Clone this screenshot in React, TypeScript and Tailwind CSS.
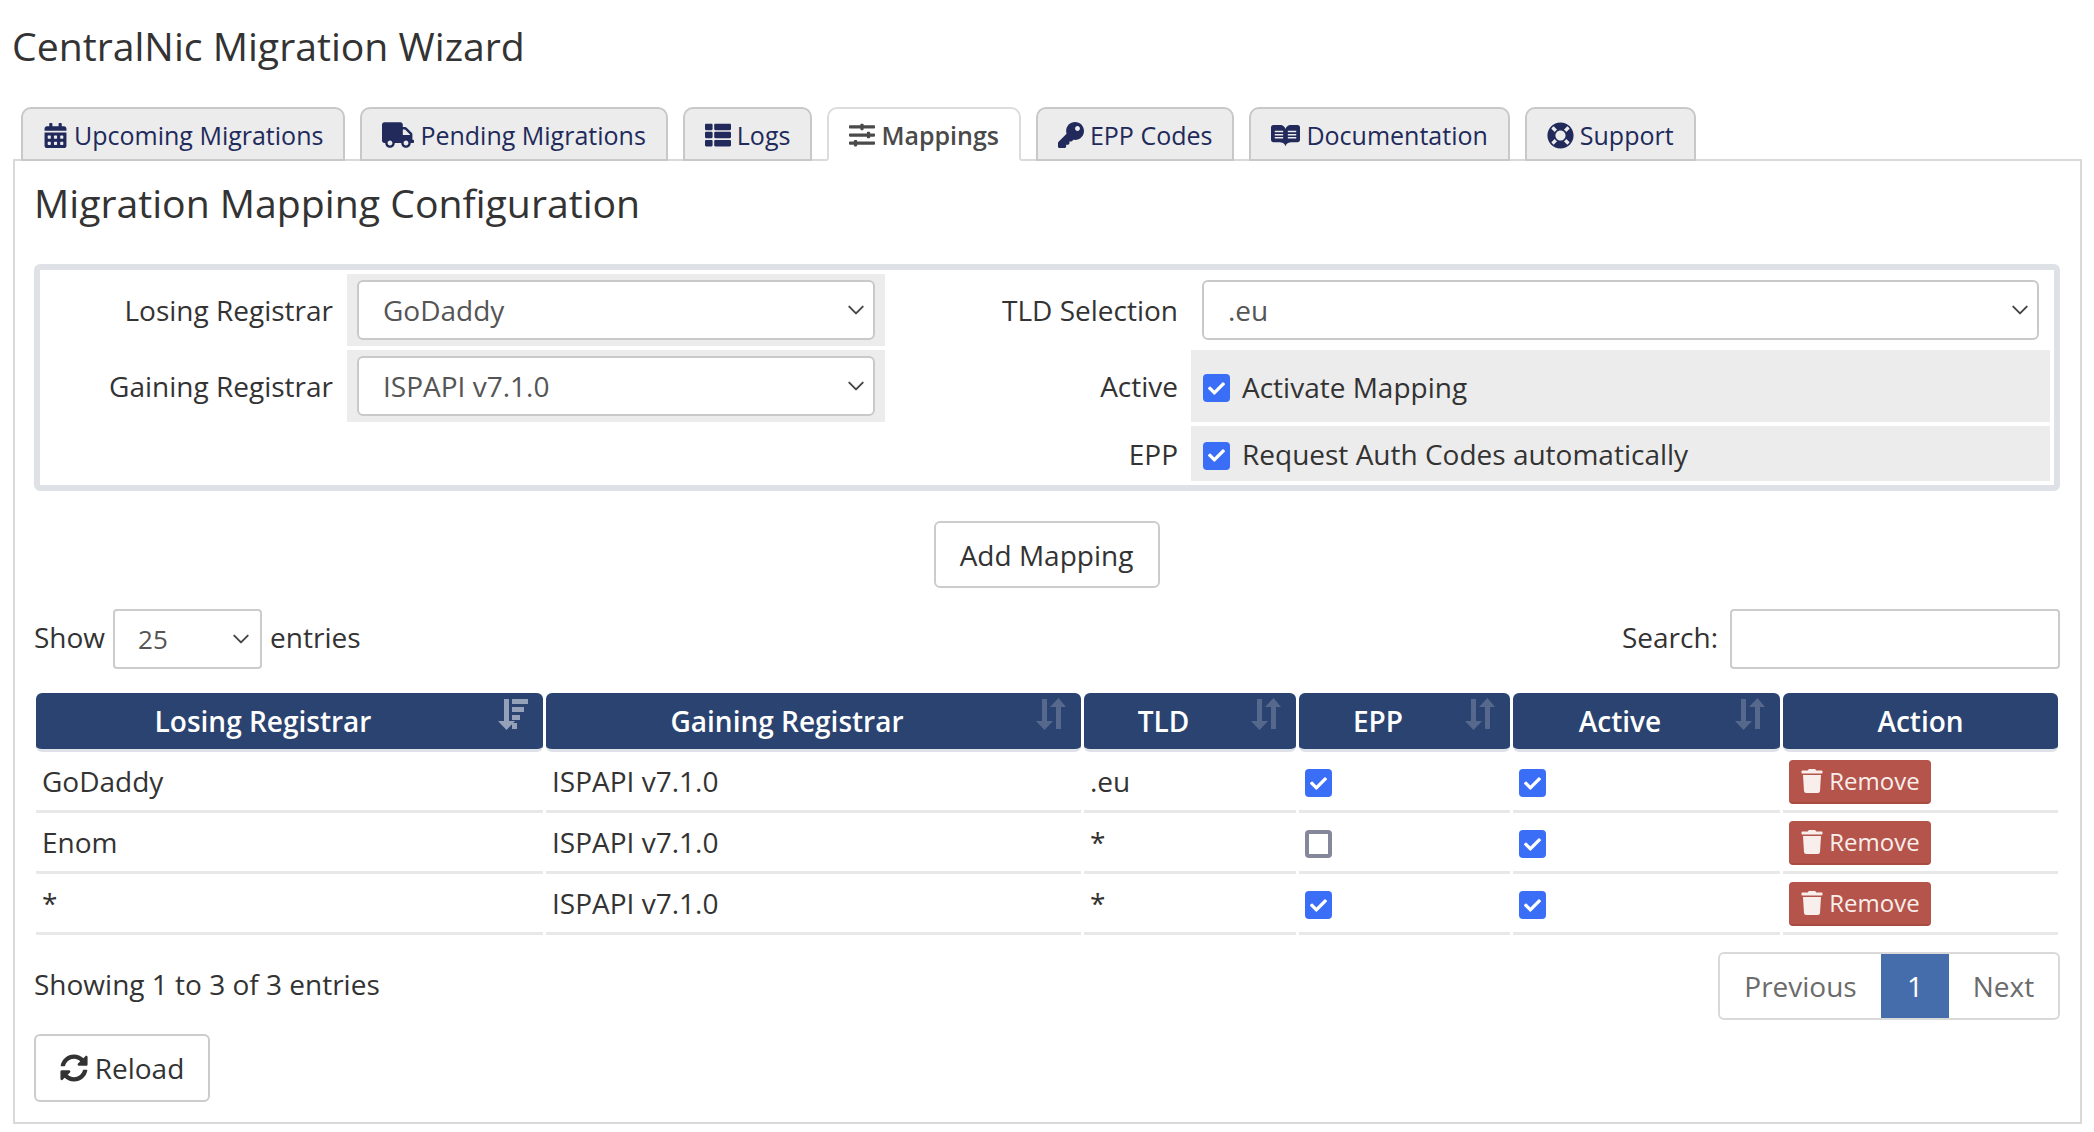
import type { ReactNode } from "react";
import {
  FaCalendarAlt,
  FaCheck,
  FaKey,
  FaLifeRing,
  FaReadme,
  FaSlidersH,
  FaSyncAlt,
  FaThList,
  FaTrash,
  FaTruck,
} from "react-icons/fa";

const tabs = [
  { label: "Upcoming Migrations", icon: <FaCalendarAlt className="text-[25px]" /> },
  { label: "Pending Migrations", icon: <FaTruck className="text-[32px]" /> },
  { label: "Logs", icon: <FaThList className="text-[26px]" /> },
  { label: "Mappings", icon: <FaSlidersH className="text-[26px]" />, active: true },
  { label: "EPP Codes", icon: <FaKey className="text-[26px]" /> },
  { label: "Documentation", icon: <FaReadme className="text-[29px]" /> },
  { label: "Support", icon: <FaLifeRing className="text-[27px]" /> },
];

const rows = [
  { losing: "GoDaddy", gaining: "ISPAPI v7.1.0", tld: ".eu", epp: true, active: true },
  { losing: "Enom", gaining: "ISPAPI v7.1.0", tld: "*", epp: false, active: true },
  { losing: "*", gaining: "ISPAPI v7.1.0", tld: "*", epp: true, active: true },
];

function Chevron({ right }: { right: string }) {
  return (
    <svg
      viewBox="0 0 16 16"
      className={`pointer-events-none absolute top-1/2 h-[18px] w-[18px] -translate-y-1/2 ${right}`}
      fill="none"
      stroke="#444"
      strokeWidth="1.7"
      strokeLinecap="round"
      strokeLinejoin="round"
    >
      <path d="M2 5l6 6 6-6" />
    </svg>
  );
}

function Select({ value, className }: { value: string; className: string }) {
  return (
    <div className={`relative ${className}`}>
      <select
        defaultValue={value}
        className="h-full w-full appearance-none rounded-[6px] border-2 border-[#c9c9c9] bg-white pl-[24px] text-[#555] outline-none"
      >
        <option>{value}</option>
      </select>
      <Chevron right="right-[10px]" />
    </div>
  );
}

function Check({ on }: { on: boolean }) {
  if (!on) {
    return <span className="mt-[4px] block h-[28px] w-[27px] rounded-[4px] border-[4px] border-[#85879a] bg-white" />;
  }
  return (
    <span className="mt-[4px] flex h-[28px] w-[27px] items-center justify-center rounded-[4px] bg-[#3b6ef6] text-white">
      <FaCheck className="text-[17px]" />
    </span>
  );
}

function SortIcon({ sorted }: { sorted?: boolean }) {
  return (
    <svg
      viewBox="0 0 30 32"
      className={`absolute top-[5px] right-[15px] h-[32px] w-[30px] ${sorted ? "opacity-50" : "opacity-20"}`}
      fill="#fff"
    >
      <path d="M6 1h5v22h6L8.5 32 0 23h6z" />
      {sorted ? (
        <path d="M14 1h16v5H14zM14 9h12v5H14zM14 17h8v5h-8zM14 25h5v6h-5z" />
      ) : (
        <path d="M20 31h5V9h5L22.5 0 14 9h6z" />
      )}
    </svg>
  );
}

function Button({ children, className }: { children: ReactNode; className: string }) {
  return (
    <button className={`rounded-[6px] border-2 border-[#ccc] bg-white text-[#333] ${className}`}>
      {children}
    </button>
  );
}

function Th({ children, sort, sorted }: { children: string; sort?: boolean; sorted?: boolean }) {
  return (
    <th
      className={`relative h-[59px] rounded-[6px] border-b-[3px] border-[#dfe2e8] bg-[#2b4370] text-center font-semibold text-white ${
        sort ? "pr-[53px]" : ""
      }`}
    >
      {children}
      {sort && <SortIcon sorted={sorted} />}
    </th>
  );
}

function Td({ children }: { children: ReactNode }) {
  return <td className="h-[61px] border-b-[3px] border-[#e8e8e8] px-[6px] align-middle">{children}</td>;
}

export default function App() {
  return (
    <div className="min-h-[1132px] bg-white pr-[12px] pl-[13px] font-['Open_Sans',sans-serif] text-[28px] leading-[40px] text-[#333]">
      <h1 className="-ml-px pt-[21px] text-[39.2px] leading-[50px] font-normal">CentralNic Migration Wizard</h1>

      {/* tabs */}
      <div className="mt-[36px] flex gap-[15px] pl-[8px]">
        {tabs.map((t) => (
          <div
            key={t.label}
            className={`relative -mb-[2px] flex h-[54px] items-center gap-[6px] rounded-t-[10px] border-2 px-[20px] pt-[2px] text-[25px] ${
              t.active
                ? "z-10 border-[#dcdcdc] border-b-white bg-white font-semibold text-[#4a4a4a]"
                : "border-[#c8c8c8] bg-[#ececec] text-[#212a5a]"
            }`}
          >
            {t.icon}
            <span>{t.label}</span>
          </div>
        ))}
      </div>

      <div className="h-[965px] border-2 border-[#d9d9d9] px-[19px]">
        <h2 className="pt-[17px] text-[39.2px] leading-[50px] font-normal">Migration Mapping Configuration</h2>

        {/* mapping form */}
        <div className="mt-[36px] h-[227px] w-[2026px] rounded-[6px] border-[6px] border-[#dee2e6] pt-[4px] pr-[4px]">
          <div className="grid grid-cols-[307px_538px_306px_859px] grid-rows-[72px_72px_55px] gap-y-[4px]">
            <div className="self-center pr-[14px] text-right">Losing Registrar</div>
            <div className="flex items-center bg-[#ececec] px-[10px]">
              <Select value="GoDaddy" className="h-[60px] w-full" />
            </div>
            <div className="self-center pr-[13px] text-right">TLD Selection</div>
            <div className="flex items-center bg-white px-[11px]">
              <Select value=".eu" className="h-[60px] w-full" />
            </div>

            <div className="self-center pr-[14px] text-right">Gaining Registrar</div>
            <div className="flex items-center bg-[#ececec] px-[10px]">
              <Select value="ISPAPI v7.1.0" className="h-[60px] w-full" />
            </div>
            <div className="self-center pr-[13px] text-right">Active</div>
            <div className="flex items-center gap-[12px] bg-[#ececec] pl-[12px]">
              <Check on />
              <span className="pt-[1px]">Activate Mapping</span>
            </div>

            <div />
            <div />
            <div className="self-center pr-[13px] text-right">EPP</div>
            <div className="flex items-center gap-[12px] bg-[#ececec] pl-[12px]">
              <Check on />
              <span className="pt-[1px]">Request Auth Codes automatically</span>
            </div>
          </div>
        </div>

        <div className="mt-[30px] flex justify-center pr-[2px]">
          <Button className="h-[67px] w-[226px]">Add Mapping</Button>
        </div>

        {/* table controls */}
        <div className="mt-[21px] flex h-[60px] w-[2026px] items-center justify-between">
          <div className="flex items-center gap-[8px]">
            <span className="-mt-[5px]">Show</span>
            <div className="relative h-[60px] w-[149px]">
              <select
                defaultValue="25"
                className="h-full w-full appearance-none rounded-[4px] border-2 border-[#ccc] bg-white pl-[23px] text-[26px] text-[#555] outline-none"
              >
                <option>25</option>
              </select>
              <Chevron right="right-[12px]" />
            </div>
            <span className="-mt-[5px]">entries</span>
          </div>
          <div className="flex items-center gap-[12px]">
            <span className="-mt-[5px]">Search:</span>
            <input className="h-[60px] w-[330px] rounded-[4px] border-2 border-[#ccc] bg-white outline-none" />
          </div>
        </div>

        <table className="mt-[24px] -ml-px w-[2028px] table-fixed border-separate border-spacing-x-[3px] border-spacing-y-0">
          <colgroup>
            <col className="w-[507px]" />
            <col className="w-[535px]" />
            <col className="w-[212px]" />
            <col className="w-[211px]" />
            <col className="w-[267px]" />
            <col className="w-[275px]" />
          </colgroup>
          <thead>
            <tr>
              <Th sort sorted>Losing Registrar</Th>
              <Th sort>Gaining Registrar</Th>
              <Th sort>TLD</Th>
              <Th sort>EPP</Th>
              <Th sort>Active</Th>
              <Th>Action</Th>
            </tr>
          </thead>
          <tbody>
            {rows.map((r, i) => (
              <tr key={i}>
                <Td>{r.losing}</Td>
                <Td>{r.gaining}</Td>
                <Td>{r.tld}</Td>
                <Td><Check on={r.epp} /></Td>
                <Td><Check on={r.active} /></Td>
                <Td>
                  <button className="mt-[1px] flex h-[44px] w-[142px] items-center justify-center gap-[5px] rounded-[4px] border-b-2 border-[#a84c42] bg-[#b5544a] text-[24px] text-[#f8eeec]">
                    <FaTrash className="text-[24px]" />
                    Remove
                  </button>
                </Td>
              </tr>
            ))}
          </tbody>
        </table>

        <div className="mt-[17px] flex w-[2026px] items-center justify-between">
          <span className="-mt-[4px]">Showing 1 to 3 of 3 entries</span>
          <div className="flex h-[68px] overflow-hidden rounded-[6px] border-2 border-[#d9d9d9] text-[#6b6b6b]">
            <span className="flex w-[161px] items-center justify-center">Previous</span>
            <span className="-my-[2px] flex w-[68px] items-center justify-center bg-[#466dab] text-white">1</span>
            <span className="flex w-[109px] items-center justify-center">Next</span>
          </div>
        </div>

        <Button className="mt-[14px] flex h-[68px] w-[176px] items-center justify-center gap-[7px]">
          <FaSyncAlt className="text-[28px]" />
          Reload
        </Button>
      </div>
    </div>
  );
}
